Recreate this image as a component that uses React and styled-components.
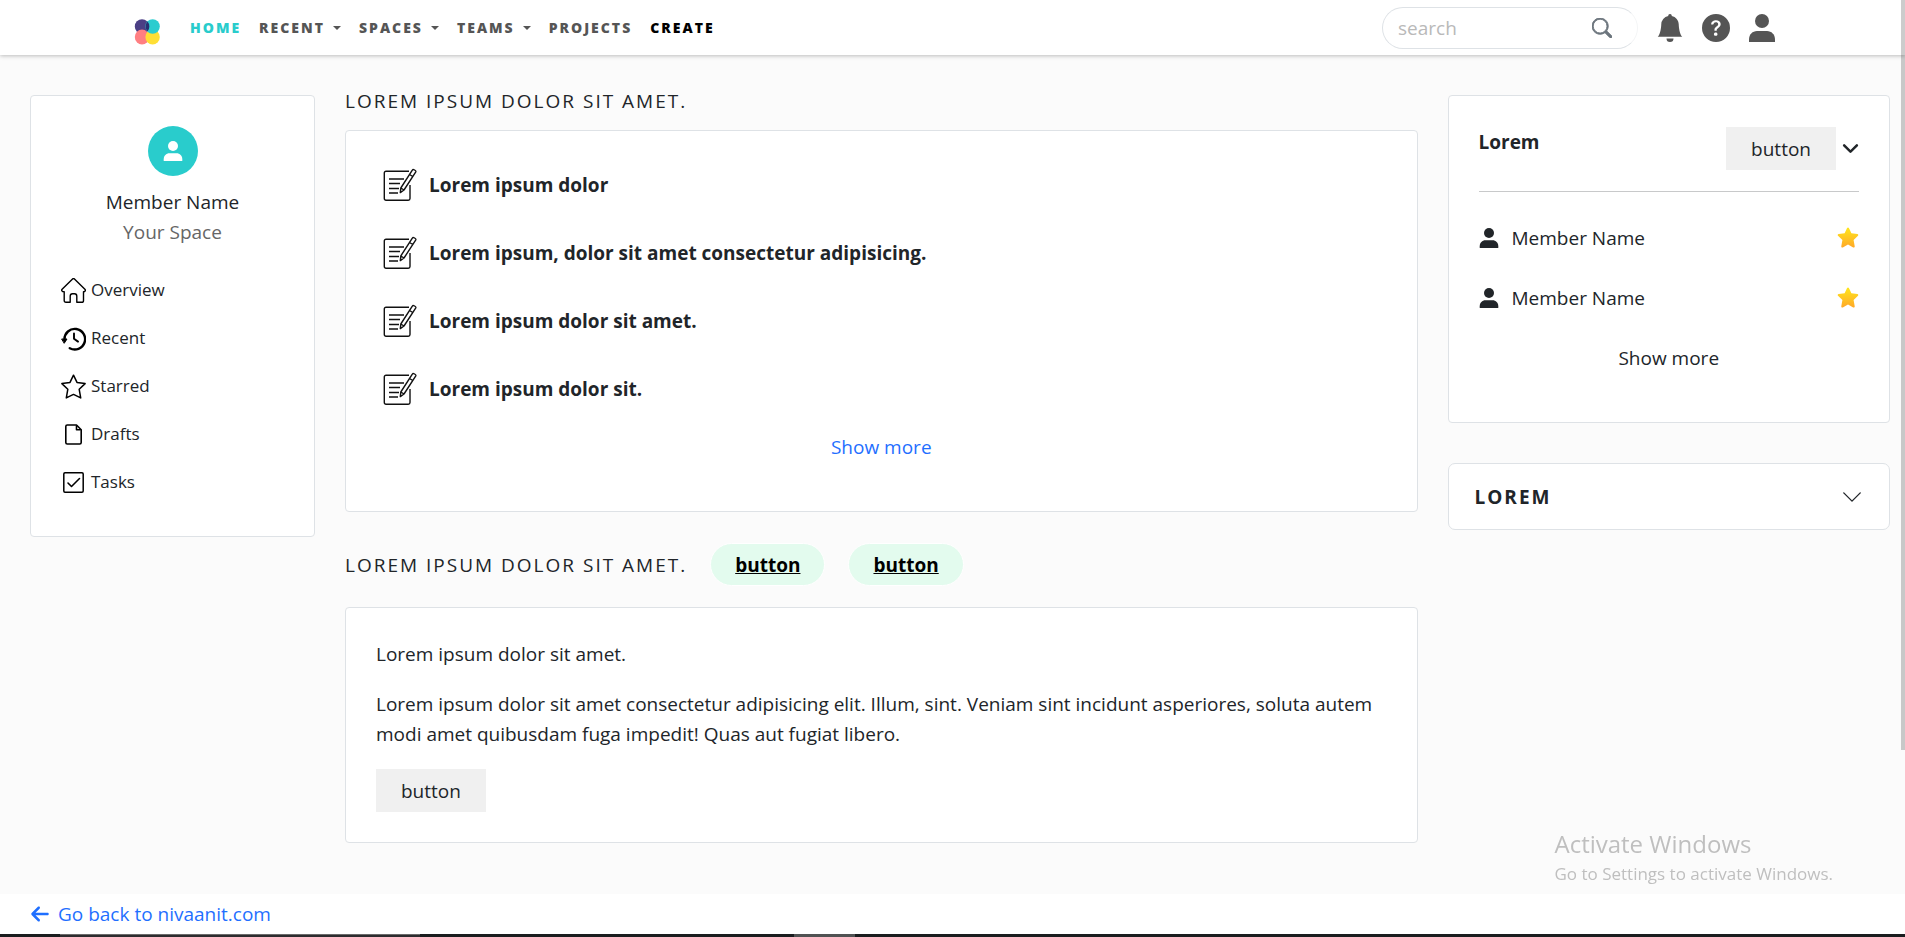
import React, { useState } from 'react';
import styled, { createGlobalStyle } from 'styled-components';
import { BsBellFill, BsChevronDown, BsQuestionCircleFill, BsSearch } from 'react-icons/bs';
import { FaArrowLeft } from 'react-icons/fa6';

const GlobalStyle = createGlobalStyle`
  * {
    box-sizing: border-box;
  }

  body {
    margin: 0;
    background: #fbfbfb;
    color: #212529;
    font-family: 'Segoe UI', 'Open Sans', sans-serif;
    font-size: 19px;
    line-height: 30px;
  }

  a {
    text-decoration: none;
  }

  button,
  input {
    font: inherit;
  }

  svg {
    display: block;
    flex-shrink: 0;
  }
`;

const Page = styled.div`
  min-height: 100vh;
  display: flex;
  flex-direction: column;
`;

const Navbar = styled.header`
  display: flex;
  align-items: center;
  justify-content: space-between;
  height: 55px;
  padding: 0 129px 0 134px;
  background: #fff;
  box-shadow: 0 1px 4px rgba(0, 0, 0, 0.25);
`;

const NavLinks = styled.nav`
  display: flex;
  align-items: center;
  gap: 18px;
`;

const Brand = styled.a`
  margin: 8px 12px 0 0;
`;

const NavLink = styled.a`
  display: flex;
  align-items: center;
  gap: 8px;
  color: ${({ $color }) => $color || '#555'};
  font-size: 14px;
  font-weight: 800;
  letter-spacing: 2px;
  text-transform: uppercase;
`;

const Caret = styled.span`
  border: 4px solid transparent;
  border-top-color: currentColor;
  border-bottom: 0;
`;

const NavTools = styled.div`
  display: flex;
  align-items: center;
  gap: 18px;
  color: #555;
`;

const SearchBox = styled.form`
  display: flex;
  align-items: center;
  width: 256px;
  height: 42px;
  padding: 0 10px 0 15px;
  border: 1px solid #dee2e6;
  border-right-color: #f4f5f6;
  border-radius: 21px;
`;

const SearchInput = styled.input`
  flex: 1;
  min-width: 0;
  padding: 0;
  border: 0;
  outline: 0;
  background: none;

  &::placeholder {
    color: #b9b9b9;
  }
`;

const IconButton = styled.button`
  display: flex;
  padding: 0;
  border: 0;
  background: none;
  color: ${({ $color }) => $color || 'inherit'};
  cursor: pointer;
`;

const SearchButton = styled(IconButton)`
  padding: 0 15px;
`;

const Main = styled.main`
  flex: 1;
  display: grid;
  grid-template-columns: 2fr 7fr 3fr;
  align-items: start;
  padding: 0 0 51px 15px;
`;

const Column = styled.div`
  min-width: 0;
  padding: ${({ $top }) => $top || '40px'} 15px 0;
`;

const Card = styled.section`
  padding: 30px;
  background: #fff;
  border: 1px solid #dee2e6;
  border-radius: 4px;
`;

const Profile = styled.div`
  display: flex;
  flex-direction: column;
  align-items: center;
  margin-bottom: 28px;
`;

const Avatar = styled.div`
  display: flex;
  align-items: center;
  justify-content: center;
  width: 50px;
  height: 50px;
  margin-bottom: 11px;
  border-radius: 50%;
  background: #29cccc;
  color: #fff;
`;

const Muted = styled.span`
  color: #666;
`;

const SideList = styled.ul`
  display: flex;
  flex-direction: column;
  gap: 18px;
  margin: 0;
  padding: 0 0 9px;
  list-style: none;
`;

const SideLink = styled.a`
  display: flex;
  align-items: center;
  gap: 5px;
  color: #212529;
  font-size: 17px;
`;

const Title = styled.h2`
  margin: 0;
  font-size: 19px;
  font-weight: 400;
  letter-spacing: 2px;
  text-transform: uppercase;
`;

const TitleRow = styled.div`
  display: flex;
  align-items: center;
  gap: 23px;
  margin: 31px 0 21px;
`;

const PillButton = styled.button`
  height: 43px;
  padding: 0 24px;
  border: 1px solid #fff;
  border-radius: 22px;
  background: #e3fbee;
  color: #000;
  font-weight: 700;
  text-decoration: underline;
  cursor: pointer;
`;

const PostCard = styled(Card)`
  margin-top: 14px;
  padding-bottom: 49px;
`;

const PostList = styled.ul`
  display: flex;
  flex-direction: column;
  gap: 34px;
  margin: 0 0 19px;
  padding: 7px;
  list-style: none;
`;

const Post = styled.li`
  display: flex;
  align-items: center;
  gap: 12px;
  height: 34px;
  font-weight: 700;
`;

const ShowMore = styled.a`
  display: block;
  width: fit-content;
  margin: 0 auto;
  color: ${({ $color }) => $color || '#212529'};
`;

const TextCard = styled(Card)`
  padding-top: 31px;
`;

const Text = styled.p`
  margin: 0 0 20px;
`;

const GreyButton = styled.button`
  height: 43px;
  padding: 0 25px;
  border: 0;
  background: #f0f0f0;
  color: #212529;
  cursor: pointer;
`;

const MembersCard = styled(Card)`
  padding: 31px 30px 49px;
`;

const MembersHeader = styled.div`
  display: flex;
  justify-content: space-between;
  padding-bottom: 21px;
  border-bottom: 1px solid #c8c9ca;
`;

const MembersTitle = styled.h3`
  margin: 0;
  font-size: 19px;
  font-weight: 700;
`;

const Actions = styled.div`
  display: flex;
  align-items: center;
  gap: 6px;
`;

const MemberList = styled.ul`
  display: flex;
  flex-direction: column;
  gap: 30px;
  margin: 31px 0 30px;
  padding: 0;
  list-style: none;
`;

const Member = styled.li`
  display: flex;
  align-items: center;
  justify-content: space-between;
`;

const MemberName = styled.span`
  display: flex;
  align-items: center;
  gap: 13px;
`;

const Accordion = styled.button`
  display: flex;
  align-items: center;
  justify-content: space-between;
  width: 100%;
  height: 67px;
  margin-top: 40px;
  padding: 0 26px;
  border: 1px solid #dee2e6;
  border-radius: 7px;
  background: #fff;
  color: #212529;
  font-weight: 700;
  letter-spacing: 2px;
  text-transform: uppercase;
  cursor: pointer;
`;

const Footer = styled.footer`
  padding: 5px 30px 8px;
  background: #fff;
`;

const BackLink = styled.a`
  display: flex;
  align-items: center;
  gap: 8px;
  width: fit-content;
  color: #1f6fff;
`;

const Scrollbar = styled.div`
  position: fixed;
  top: 0;
  right: 0;
  width: 4px;
  height: 80vh;
  background: rgba(0, 0, 0, 0.2);
`;

const Watermark = styled.aside`
  position: fixed;
  right: 72px;
  bottom: 48px;
  color: #bfbfbf;
  font-size: 17px;
  pointer-events: none;
`;

const WatermarkTitle = styled.div`
  font-size: 24px;
`;

const Taskbar = styled.div`
  position: fixed;
  right: 0;
  bottom: 0;
  left: 0;
  display: flex;
  gap: 374px;
  height: 3px;
  padding-left: 60px;
  background: #1a1d1f;
`;

const TaskbarItem = styled.span`
  width: ${({ $width }) => $width};
  border-top: 1px solid ${({ $edge }) => $edge};
  background: ${({ $fill }) => $fill};
`;

const SearchIcon = styled(BsSearch)`
  stroke-width: 0.7;
`;

const Logo = () => (
  <svg width="26" height="26" viewBox="0 0 26 26" aria-hidden="true">
    <ellipse cx="8" cy="7.5" rx="7.2" ry="7.3" fill="#4b3f85" />
    <ellipse cx="8" cy="18" rx="7.2" ry="7.5" fill="#ff7f82" />
    <ellipse cx="18.6" cy="18" rx="7.2" ry="7.5" fill="#ffdf35" />
    <ellipse cx="18.6" cy="7.5" rx="7.2" ry="7.3" fill="#2bcccf" />
    <path d="M13.5 2.6a7.2 7.3 0 0 1 0 9.8 7.2 7.3 0 0 1 0-9.8z" fill="#2b2f73" />
  </svg>
);

// Bust with a flat base, drawn to the full height of its box
const PersonIcon = ({ size }) => (
  <svg width={size} height={size} viewBox="0 0 28 28" fill="currentColor" aria-hidden="true">
    <circle cx="14" cy="7" r="7" />
    <path d="M1 28v-2.5C1 20.5 4.5 17 9 17h10c4.500 0 8 3.500 8 8.500V28z" />
  </svg>
);

const HomeIcon = () => (
  <svg width="25" height="25" viewBox="0 0 25 25" fill="none" stroke="#000" strokeWidth="1.4" strokeLinejoin="round" aria-hidden="true">
    <path d="M11.3 1.2a1.7 1.7 0 0 1 2.4 0l10.2 10.1c.9.9.3 2.5-1.4 2.5v8.6c0 1.2-.6 1.9-1.8 1.9h-4.9v-6.1c0-1.6-1-2.5-2.3-2.5h-2c-1.3 0-2.3.9-2.3 2.5v6.1H5c-1.2 0-1.8-.7-1.8-1.9v-8.6c-2.4 0-3-1.6-2.1-2.5z" />
  </svg>
);

const HistoryIcon = () => (
  <svg width="25" height="25" viewBox="0 0 25 25" fill="none" stroke="#000" strokeLinecap="round" strokeLinejoin="round" aria-hidden="true">
    <path d="M3.5 13.5A10.3 10.3 0 1 1 8.8 22.2" strokeWidth="2.4" />
    <path d="M13 7.5v5.3l4 2.8" strokeWidth="1.9" />
    <path d="M1 13h5l-2.6 4z" fill="#000" />
  </svg>
);

const StarIcon = () => (
  <svg width="25" height="25" viewBox="0 0 25 25" fill="none" stroke="#000" strokeWidth="1.5" strokeLinejoin="round" aria-hidden="true">
    <path d="M12.5 1.2l3.5 7.2 8.1 1.2-5.9 5.7 1.5 8.6-7.2-3.5-7.2 3.5 1.5-8.6L.9 9.6 9 8.4z" />
  </svg>
);

const DraftIcon = () => (
  <svg width="25" height="25" viewBox="0 0 25 25" fill="none" stroke="#000" strokeWidth="1.6" strokeLinejoin="round" aria-hidden="true">
    <path d="M6.3 3h9.2l4.7 4.7v12.8c0 .9-.6 1.5-1.5 1.5H6.3c-.9 0-1.5-.6-1.5-1.5v-16C4.8 3.6 5.4 3 6.3 3z" />
    <path d="M15.5 3.5v4.2h4.2" />
  </svg>
);

const TaskIcon = () => (
  <svg width="25" height="25" viewBox="0 0 25 25" fill="none" stroke="#000" strokeLinecap="round" strokeLinejoin="round" aria-hidden="true">
    <rect x="2.8" y="2.8" width="19.4" height="19.4" rx="1.2" strokeWidth="1.5" />
    <path d="M7 13l3.5 3.5 8-8" strokeWidth="1.6" />
  </svg>
);

const NoteIcon = () => (
  <svg width="34" height="34" viewBox="0 0 34 34" fill="none" stroke="#111" strokeWidth="1.4" strokeLinejoin="round" aria-hidden="true">
    <path d="M27 17v13.5c0 1-.7 1.7-1.7 1.7H3c-1 0-1.7-.7-1.7-1.7V5c0-1 .7-1.7 1.7-1.7h23" />
    <path d="M6 11h15M6 15.5h11M6 20.5h10M6 25h9" />
    <path d="M29.5 1.8c.6-1 3.9.9 3.3 2L21 22l-3.7 2.6.5-4.6zM26.5 6.500l3.300 2M17.800 20l3.200 2" fill="#fff" />
  </svg>
);

const GoldStar = () => (
  <svg width="22" height="22" viewBox="0 0 22 22" aria-hidden="true">
    <defs>
      <linearGradient id="gold" x1="0" y1="0" x2="0" y2="1">
        <stop offset="0" stopColor="#ffe61c" />
        <stop offset="1" stopColor="#ffa929" />
      </linearGradient>
    </defs>
    <path
      d="M10.1 1.1c.4-.8 1.4-.8 1.8 0l2.5 5.2 6 .8c.9.1 1.2 1.1.6 1.7l-4.4 4.1 1.1 6.3c.2.9-.7 1.7-1.5 1.3L11 17.6l-5.2 2.9c-.8.4-1.7-.4-1.5-1.3l1.1-6.3L1 8.8c-.6-.6-.3-1.6.6-1.7l6-.8z"
      fill="url(#gold)"
    />
  </svg>
);

const navItems = [
  { label: 'Home', color: '#29cccc' },
  { label: 'Recent', menu: true },
  { label: 'Spaces', menu: true },
  { label: 'Teams', menu: true },
  { label: 'Projects' },
  { label: 'Create', color: '#000' },
];

const sideItems = [
  { label: 'Overview', Icon: HomeIcon },
  { label: 'Recent', Icon: HistoryIcon },
  { label: 'Starred', Icon: StarIcon },
  { label: 'Drafts', Icon: DraftIcon },
  { label: 'Tasks', Icon: TaskIcon },
];

const posts = [
  'Lorem ipsum dolor',
  'Lorem ipsum, dolor sit amet consectetur adipisicing.',
  'Lorem ipsum dolor sit amet.',
  'Lorem ipsum dolor sit.',
];

const App = () => {
  const [query, setQuery] = useState('');

  return (
    <Page>
      <GlobalStyle />
      <Navbar>
        <NavLinks>
          <Brand href="#" aria-label="Logo">
            <Logo />
          </Brand>
          {navItems.map(({ label, color, menu }) => (
            <NavLink key={label} href="#" $color={color}>
              {label}
              {menu && <Caret />}
            </NavLink>
          ))}
        </NavLinks>
        <NavTools>
          <SearchBox onSubmit={(event) => event.preventDefault()}>
            <SearchInput
              type="text"
              aria-label="search"
              placeholder="search"
              value={query}
              onChange={(event) => setQuery(event.target.value)}
            />
            <SearchButton type="submit" aria-label="Submit search" $color="#6c757d">
              <SearchIcon size={20} />
            </SearchButton>
          </SearchBox>
          <IconButton aria-label="Notifications"><BsBellFill size={28} /></IconButton>
          <IconButton aria-label="Help"><BsQuestionCircleFill size={28} /></IconButton>
          <IconButton aria-label="Account"><PersonIcon size={28} /></IconButton>
        </NavTools>
      </Navbar>

      <Main>
        <Column>
          <Card>
            <Profile>
              <Avatar><PersonIcon size={20} /></Avatar>
              <span>Member Name</span>
              <Muted>Your Space</Muted>
            </Profile>
            <SideList>
              {sideItems.map(({ label, Icon }) => (
                <li key={label}>
                  <SideLink href="#">
                    <Icon />
                    {label}
                  </SideLink>
                </li>
              ))}
            </SideList>
          </Card>
        </Column>

        <Column $top="31px">
          <Title>Lorem ipsum dolor sit amet.</Title>
          <PostCard>
            <PostList>
              {posts.map((post) => (
                <Post key={post}>
                  <NoteIcon />
                  {post}
                </Post>
              ))}
            </PostList>
            <ShowMore href="#" $color="#1f6fff">Show more</ShowMore>
          </PostCard>
          <TitleRow>
            <Title>Lorem ipsum dolor sit amet.</Title>
            <PillButton>button</PillButton>
            <PillButton>button</PillButton>
          </TitleRow>
          <TextCard>
            <Text>Lorem ipsum dolor sit amet.</Text>
            <Text>
              Lorem ipsum dolor sit amet consectetur adipisicing elit. Illum, sint. Veniam sint incidunt
              asperiores, soluta autem modi amet quibusdam fuga impedit! Quas aut fugiat libero.
            </Text>
            <GreyButton>button</GreyButton>
          </TextCard>
        </Column>

        <Column>
          <MembersCard>
            <MembersHeader>
              <MembersTitle>Lorem</MembersTitle>
              <Actions>
                <GreyButton>button</GreyButton>
                <IconButton aria-label="More options">
                  <BsChevronDown size={17} strokeWidth={1.4} />
                </IconButton>
              </Actions>
            </MembersHeader>
            <MemberList>
              {[1, 2].map((id) => (
                <Member key={id}>
                  <MemberName>
                    <PersonIcon size={20} />
                    Member Name
                  </MemberName>
                  <GoldStar />
                </Member>
              ))}
            </MemberList>
            <ShowMore href="#">Show more</ShowMore>
          </MembersCard>
          <Accordion aria-expanded="false">
            Lorem
            <BsChevronDown size={22} />
          </Accordion>
        </Column>
      </Main>

      <Footer>
        <BackLink href="#">
          <FaArrowLeft size={20} />
          Go back to nivaanit.com
        </BackLink>
      </Footer>

      <Watermark>
        <WatermarkTitle>Activate Windows</WatermarkTitle>
        Go to Settings to activate Windows.
      </Watermark>
      <Scrollbar />
      <Taskbar>
        <TaskbarItem $width="360px" $edge="#6a6a6a" $fill="#2c2c2e" />
        <TaskbarItem $width="61px" $edge="#505253" $fill="#505253" />
      </Taskbar>
    </Page>
  );
};

export default App;
